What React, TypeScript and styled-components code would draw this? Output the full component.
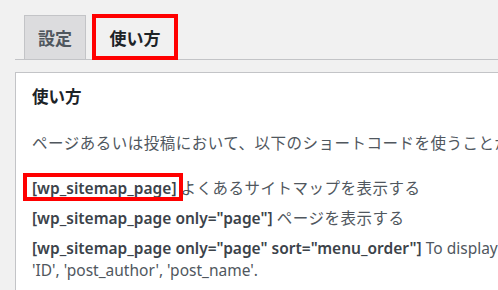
import React from 'react';
import styled, { createGlobalStyle } from 'styled-components';

const GlobalStyle = createGlobalStyle`
  html, body {
    margin: 0;
    padding: 0;
    background: #f1f1f1;
    overflow: hidden;
  }
  body {
    font-family: "Noto Sans", "Noto Sans CJK JP", sans-serif;
  }
`;

const Page = styled.div`
  width: 498px;
  height: 290px;
  padding: 14px 0 0 15px;
  box-sizing: border-box;
  overflow: hidden;
`;

const TabBar = styled.div`
  display: flex;
  align-items: flex-end;
  gap: 6px;
  padding-left: 9px;
  border-bottom: 1px solid #c3c4c7;
  margin-right: -20px;
`;

interface TabProps {
  active?: boolean;
}

const Tab = styled.div<TabProps>`
  display: flex;
  align-items: center;
  justify-content: center;
  box-sizing: border-box;
  height: ${(p: TabProps) => (p.active ? '46px' : '44px')};
  margin-bottom: ${(p: TabProps) => (p.active ? '-1px' : '0')};
  padding: 0 ${(p: TabProps) => (p.active ? '13.5px' : '13px')};
  background: ${(p: TabProps) => (p.active ? '#f1f1f1' : '#dcdcde')};
  border: ${(p: TabProps) => (p.active ? '4px solid #f00' : '1px solid #c3c4c7')};
  border-bottom: ${(p: TabProps) => (p.active ? '4px solid #f00' : 'none')};
  font-family: "Noto Sans CJK JP", sans-serif;
  font-size: 17px;
  font-weight: 700;
  color: ${(p: TabProps) => (p.active ? '#1d2327' : '#50575e')};
`;

const Panel = styled.div`
  margin-top: 12px;
  margin-right: -20px;
  background: #fff;
  border: 1px solid #c3c4c7;
  padding: 11px 16px 20px;
  height: 260px;
`;

const Heading = styled.h2`
  margin: 0 0 24px;
  font-family: "Noto Sans CJK JP", sans-serif;
  font-size: 16.5px;
  font-weight: 700;
  line-height: 24px;
  color: #1d2327;
`;

const Para = styled.p<{ gap?: number }>`
  margin: 0 0 ${(p) => (p.gap ?? 8)}px;
  font-size: 15.5px;
  line-height: 22px;
  color: #50575e;
  white-space: nowrap;
`;

const Jp = styled.span`
  letter-spacing: 0.5px;
`;

interface CodeProps {
  marked?: boolean;
}

const Code = styled.strong<CodeProps>`
  position: relative;
  font-weight: 600;
  color: #3c434a;

  &::after {
    content: '';
    display: ${(p: CodeProps) => (p.marked ? 'block' : 'none')};
    position: absolute;
    left: -9px;
    right: -6px;
    top: -4px;
    bottom: -2px;
    border: 4px solid #f00;
  }
`;

const App: React.FC = () => (
  <Page>
    <GlobalStyle />
    <TabBar>
      <Tab>設定</Tab>
      <Tab active>使い方</Tab>
    </TabBar>
    <Panel>
      <Heading>使い方</Heading>
      <Para gap={23}>
        <Jp>ページあるいは投稿において、以下のショートコードを使うことができます。</Jp>
      </Para>
      <Para>
        <Code marked>[wp_sitemap_page]</Code> <Jp>よくあるサイトマップを表示する</Jp>
      </Para>
      <Para>
        <Code>[wp_sitemap_page only="page"]</Code> <Jp>ページを表示する</Jp>
      </Para>
      <Para>
        <Code>[wp_sitemap_page only="page" sort="menu_order"]</Code> To display the pages sorted by
        <br />
        'ID', 'post_author', 'post_name'.
      </Para>
    </Panel>
  </Page>
);

export default App;
